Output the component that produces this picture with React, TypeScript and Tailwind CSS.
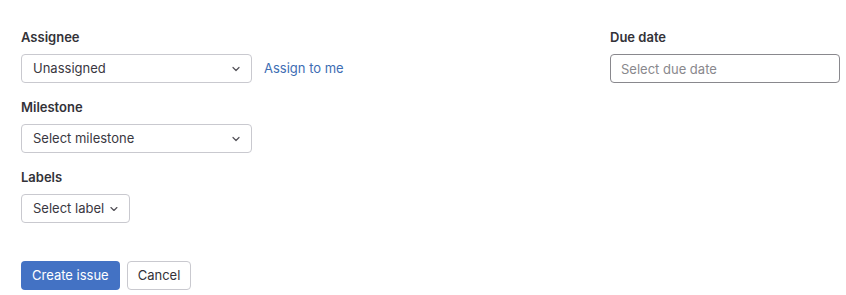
import { ChevronDown } from "lucide-react";

function Select({ text, className }: { text: string; className: string }) {
  return (
    <button
      type="button"
      className={`flex h-[29px] items-center justify-between whitespace-nowrap rounded-[4px] border border-[#c9c9cf] bg-white pl-[11px] pr-[9px] text-[13px] text-[#3a383f] ${className}`}
    >
      <span>{text}</span>
      <ChevronDown className="ml-1 h-[12px] w-[12px] text-[#535158]" strokeWidth={2.4} />
    </button>
  );
}

export default function App() {
  return (
    <div
      className="min-h-screen bg-white pl-[21px] pr-[6px] pt-[27px] text-[#333238]"
      style={{ fontFamily: "Inter, 'Noto Sans', sans-serif" }}
    >
      <div className="flex justify-between">
        <div>
          <div className="mb-[14px]">
            <label className="mb-[7px] block h-5 text-[13px] font-semibold leading-5 text-[#333238]">Assignee</label>
            <div className="flex items-center">
              <Select text="Unassigned" className="w-[231px]" />
              <a href="#" className="ml-[12px] text-[13px] text-[#3d6db3]">
                Assign to me
              </a>
            </div>
          </div>
          <div className="mb-[14px]">
            <label className="mb-[7px] block h-5 text-[13px] font-semibold leading-5">Milestone</label>
            <Select text="Select milestone" className="w-[231px]" />
          </div>
          <div>
            <label className="mb-[7px] block h-5 text-[13px] font-semibold leading-5">Labels</label>
            <Select text="Select label" className="w-[109px]" />
          </div>
        </div>
        <div className="w-[230px]">
          <label className="mb-[7px] block h-5 text-[13px] font-semibold leading-5">Due date</label>
          <input
            placeholder="Select due date"
            className="h-[29px] w-full rounded-[4px] border border-[#89888d] px-[10px] text-[13px] text-[#333238] placeholder:text-[#89888d] outline-none"
          />
        </div>
      </div>
      <div className="mt-[38px] flex gap-[7px]">
        <button type="button" className="h-[29px] whitespace-nowrap rounded-[4px] bg-[#4372c4] px-[11px] text-[13px] text-white">
          Create issue
        </button>
        <button
          type="button"
          className="h-[29px] whitespace-nowrap rounded-[4px] border border-[#c9c9cf] bg-white px-[10px] text-[13px] text-[#333238]"
        >
          Cancel
        </button>
      </div>
    </div>
  );
}
